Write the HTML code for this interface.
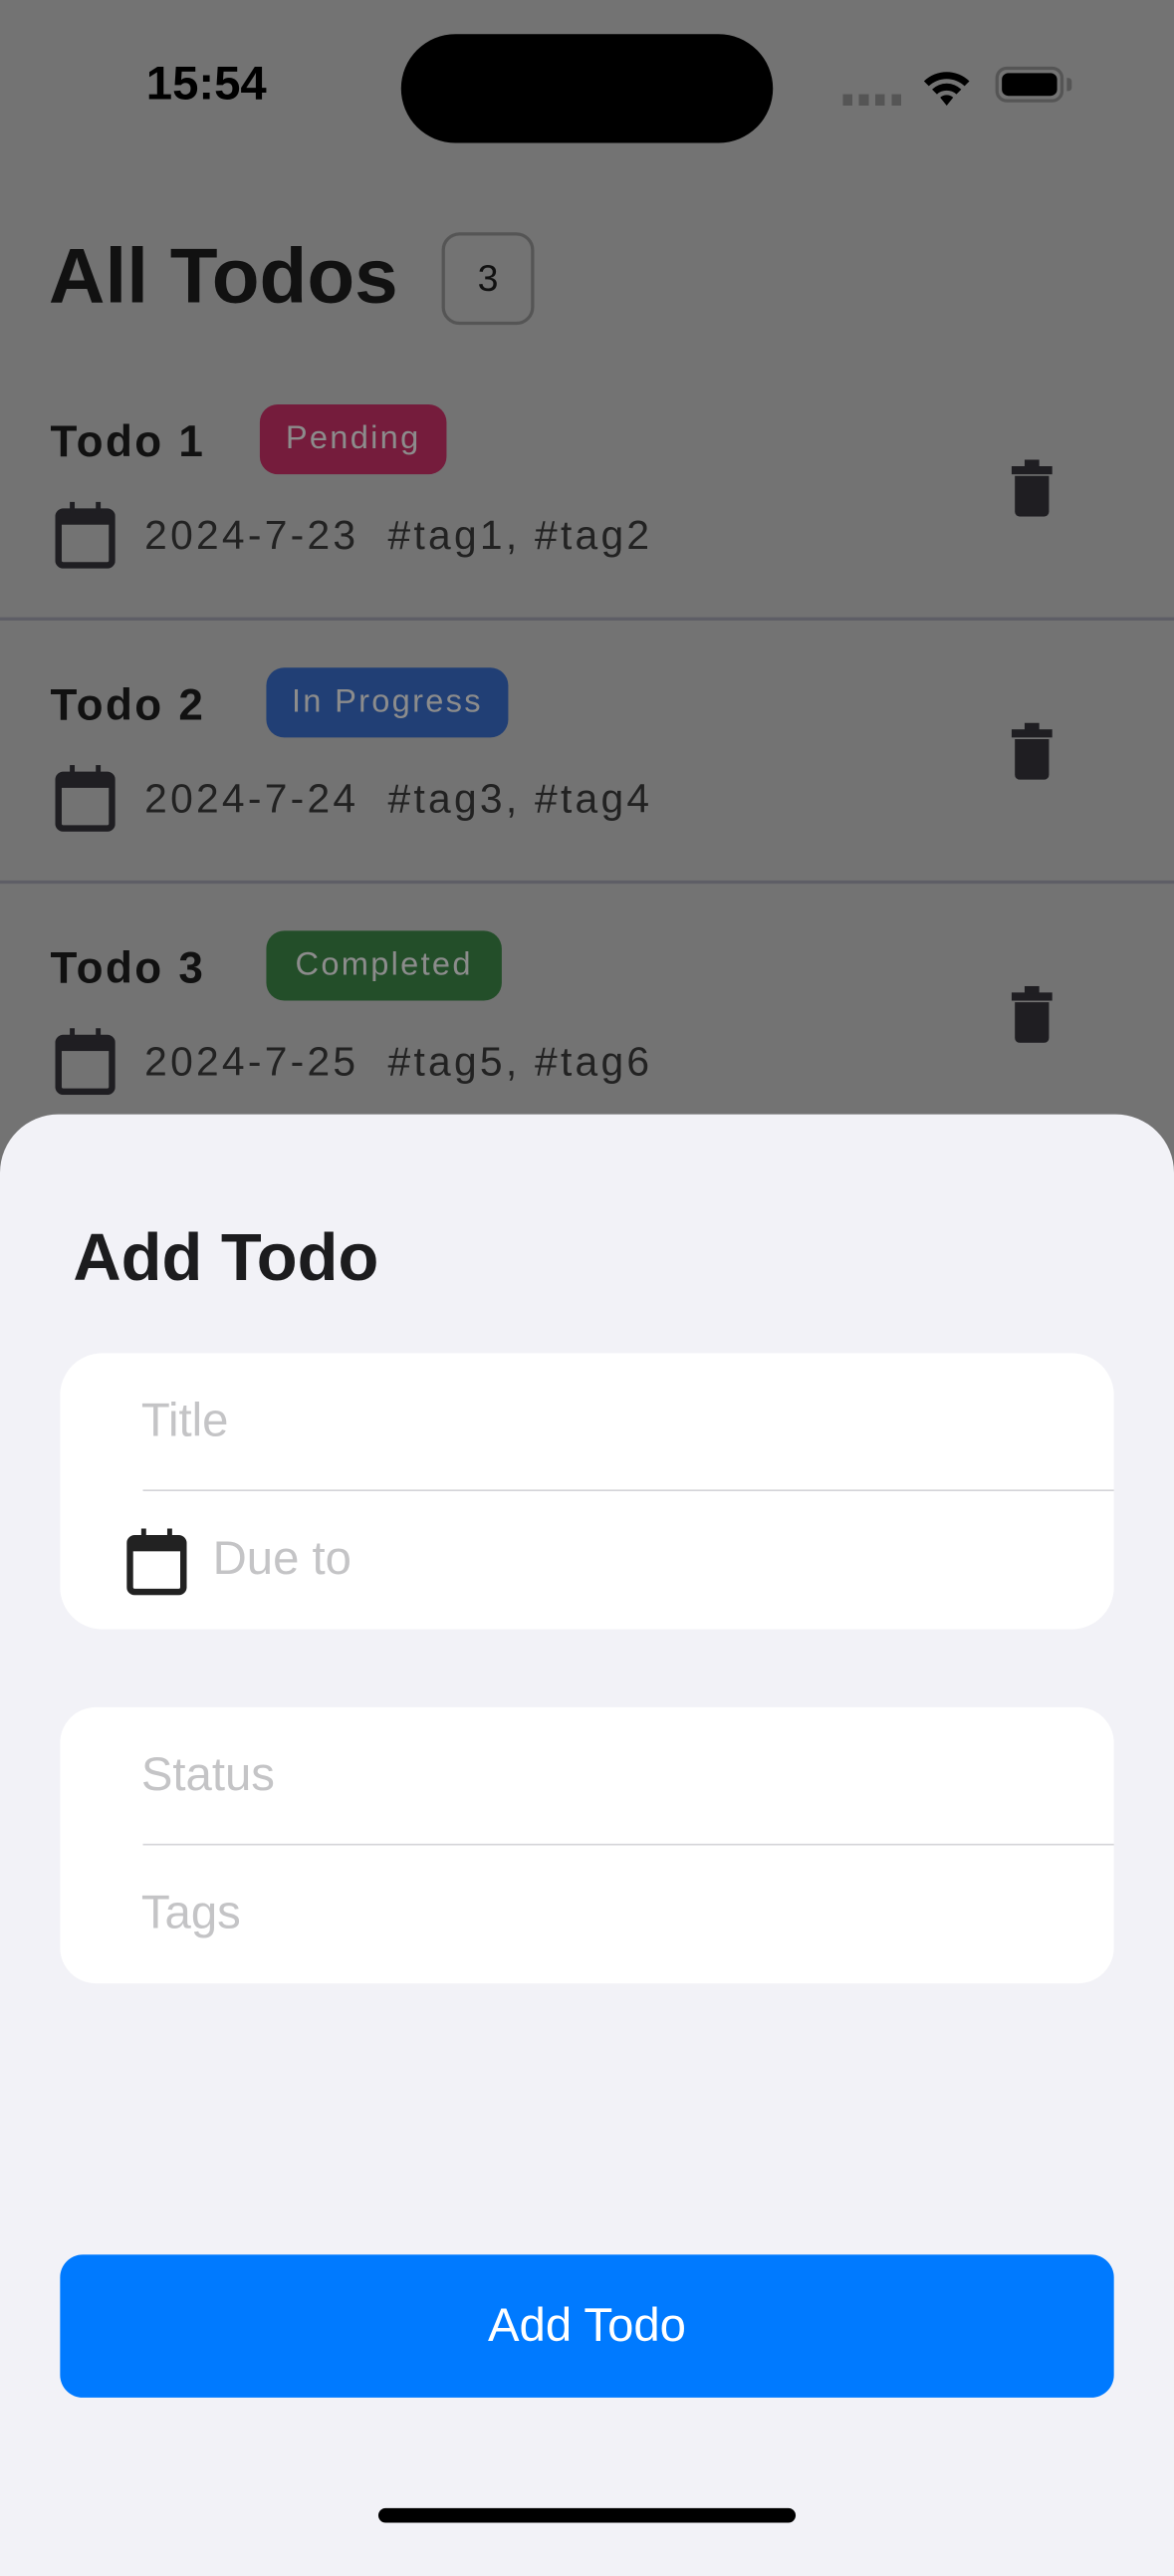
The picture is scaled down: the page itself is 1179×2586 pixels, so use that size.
<!DOCTYPE html>
<html><head><meta charset="utf-8"><style>
html,body{margin:0;padding:0;width:1179px;height:2556px;overflow:hidden;background:#737373;}
#w{position:absolute;left:0;top:0;width:723px;height:1568px;transform:scale(1.63071);transform-origin:0 0;font-family:"Liberation Sans",sans-serif;}
.a{position:absolute;}
.t{white-space:nowrap;line-height:1;}
.title{font-weight:bold;font-size:27px;color:#111;letter-spacing:1.5px}
.pill{height:43px;border-radius:11px;color:#8c8c8c;font-size:20px;letter-spacing:1.4px;line-height:43px;text-align:center}
.meta{font-size:25px;color:#222;letter-spacing:2px}
.sep{left:0;width:723px;height:2px;background:#5e5e66}
.ph{font-size:29px;color:#c4c4c6}
</style></head><body><div id="w">
<div class="a t" style="left:90px;top:38px;font-size:29px;font-weight:bold;color:#000">15:54</div>
<div class="a" style="left:247px;top:21px;width:229px;height:67px;border-radius:34px;background:#000"></div>
<div class="a" style="left:519px;top:58px;width:36px;height:7px;background:repeating-linear-gradient(90deg,#555 0 6px,transparent 6px 10px)"></div>
<svg class="a" style="left:567px;top:41px" width="32" height="26" viewBox="0 0 32 26"><path d="M2 9a20 20 0 0 1 28 0l-3 3a16 16 0 0 0-22 0z M7 14a13 13 0 0 1 18 0l-3 3a9 9 0 0 0-12 0z M12 19a6 6 0 0 1 8 0l-4 5z" fill="#000"/></svg>
<div class="a" style="left:613px;top:41px;width:42px;height:22px;border:2px solid #555;border-radius:7px;box-sizing:border-box"></div>
<div class="a" style="left:617px;top:45px;width:34px;height:14px;background:#000;border-radius:4px"></div>
<div class="a" style="left:657px;top:48px;width:3px;height:8px;background:#555;border-radius:0 2px 2px 0"></div>

<div class="a t" style="left:30px;top:147px;font-size:48px;font-weight:bold;color:#111;letter-spacing:0">All Todos</div>
<div class="a" style="left:272px;top:143px;width:57px;height:57px;border:2px solid #555;border-radius:11px;box-sizing:border-box;text-align:center;line-height:53px;font-size:23px;color:#111">3</div>

<!-- todo 1 -->
<div class="a t title" style="left:31px;top:259px">Todo 1</div>
<div class="a pill" style="left:160px;top:249px;width:115px;background:#751c3c">Pending</div>
<div class="a t meta" style="left:89px;top:318px">2024-7-23&nbsp; #tag1, #tag2</div>
<svg class="a" style="left:34px;top:308px" width="37" height="42" viewBox="0 0 37 42"><rect x="2" y="7" width="33" height="33" rx="3" fill="none" stroke="#1f1e22" stroke-width="4"/><rect x="2" y="6" width="33" height="9" fill="#1f1e22"/><rect x="9" y="1" width="3" height="7" fill="#1f1e22"/><rect x="25" y="1" width="3" height="7" fill="#1f1e22"/></svg>
<svg class="a" style="left:622px;top:283px" width="27" height="35" viewBox="0 0 27 35"><rect x="1" y="4" width="25" height="5" fill="#1f1e22"/><rect x="9" y="0" width="9" height="5" fill="#1f1e22"/><path d="M3 10h21v22a3 3 0 0 1-3 3H6a3 3 0 0 1-3-3z" fill="#1f1e22"/></svg>
<div class="a sep" style="top:380px"></div>

<!-- todo 2 -->
<div class="a t title" style="left:31px;top:421px">Todo 2</div>
<div class="a pill" style="left:164px;top:411px;width:149px;background:#213f75">In Progress</div>
<div class="a t meta" style="left:89px;top:480px">2024-7-24&nbsp; #tag3, #tag4</div>
<svg class="a" style="left:34px;top:470px" width="37" height="42" viewBox="0 0 37 42"><rect x="2" y="7" width="33" height="33" rx="3" fill="none" stroke="#1f1e22" stroke-width="4"/><rect x="2" y="6" width="33" height="9" fill="#1f1e22"/><rect x="9" y="1" width="3" height="7" fill="#1f1e22"/><rect x="25" y="1" width="3" height="7" fill="#1f1e22"/></svg>
<svg class="a" style="left:622px;top:445px" width="27" height="35" viewBox="0 0 27 35"><rect x="1" y="4" width="25" height="5" fill="#1f1e22"/><rect x="9" y="0" width="9" height="5" fill="#1f1e22"/><path d="M3 10h21v22a3 3 0 0 1-3 3H6a3 3 0 0 1-3-3z" fill="#1f1e22"/></svg>
<div class="a sep" style="top:542px"></div>

<!-- todo 3 -->
<div class="a t title" style="left:31px;top:583px">Todo 3</div>
<div class="a pill" style="left:164px;top:573px;width:145px;background:#234e29">Completed</div>
<div class="a t meta" style="left:89px;top:642px">2024-7-25&nbsp; #tag5, #tag6</div>
<svg class="a" style="left:34px;top:632px" width="37" height="42" viewBox="0 0 37 42"><rect x="2" y="7" width="33" height="33" rx="3" fill="none" stroke="#1f1e22" stroke-width="4"/><rect x="2" y="6" width="33" height="9" fill="#1f1e22"/><rect x="9" y="1" width="3" height="7" fill="#1f1e22"/><rect x="25" y="1" width="3" height="7" fill="#1f1e22"/></svg>
<svg class="a" style="left:622px;top:607px" width="27" height="35" viewBox="0 0 27 35"><rect x="1" y="4" width="25" height="5" fill="#1f1e22"/><rect x="9" y="0" width="9" height="5" fill="#1f1e22"/><path d="M3 10h21v22a3 3 0 0 1-3 3H6a3 3 0 0 1-3-3z" fill="#1f1e22"/></svg>

<!-- sheet -->
<div class="a" style="left:0;top:686px;width:723px;height:900px;background:#f2f2f7;border-radius:36px 36px 0 0"></div>
<div class="a t" style="left:45px;top:754px;font-size:41px;font-weight:bold;color:#1c1c1e;letter-spacing:0">Add Todo</div>

<div class="a" style="left:37px;top:833px;width:649px;height:170px;background:#fff;border-radius:26px"></div>
<div class="a t ph" style="left:87px;top:861px">Title</div>
<div class="a" style="left:88px;top:917px;width:598px;height:1px;background:#d4d4d8"></div>
<svg class="a" style="left:78px;top:940px" width="37" height="42" viewBox="0 0 37 42"><rect x="2" y="7" width="33" height="33" rx="3" fill="none" stroke="#222" stroke-width="4"/><rect x="2" y="6" width="33" height="9" fill="#222"/><rect x="9" y="1" width="3" height="7" fill="#222"/><rect x="25" y="1" width="3" height="7" fill="#222"/></svg>
<div class="a t ph" style="left:131px;top:946px">Due to</div>

<div class="a" style="left:37px;top:1051px;width:649px;height:170px;background:#fff;border-radius:22px"></div>
<div class="a t ph" style="left:87px;top:1079px">Status</div>
<div class="a" style="left:88px;top:1135px;width:598px;height:1px;background:#d4d4d8"></div>
<div class="a t ph" style="left:87px;top:1164px">Tags</div>

<div class="a" style="left:37px;top:1388px;width:649px;height:88px;background:#007aff;border-radius:14px;color:#fff;font-size:29px;text-align:center;line-height:88px">Add Todo</div>
<div class="a" style="left:233px;top:1544px;width:257px;height:9px;background:#000;border-radius:5px"></div>
</div></body></html>
